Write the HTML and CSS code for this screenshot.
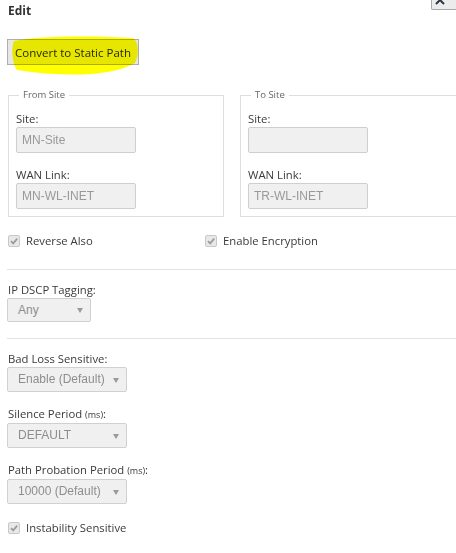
FILE: index.html
```html
<!DOCTYPE html>
<html lang="en">
<head>
    <meta charset="UTF-8">
    <meta name="viewport" content="width=device-width, initial-scale=1.0">
    <title>Edit Path</title>
    <link rel="stylesheet" href="styles.css">
</head>
<body>
    <div class="dialog">
        <div class="titlebar">
            <span class="title">Edit</span>
            <button class="close" title="Close">
                <svg width="25" height="20" viewBox="0 0 25 20"><path d="M5 6 L13 14 M13 6 L5 14" stroke="#2b3440" stroke-width="2" fill="none"/></svg>
            </button>
        </div>

        <div class="toolbar">
            <span class="marked">
                <button class="btn">Convert to Static Path</button>
                <svg class="marker" width="134" height="42" viewBox="0 0 134 42"><path d="M7 6 C 35 0, 95 1, 126 3 C 132 7, 132 20, 128 28 C 105 42, 55 42, 10 35 C 5 28, 4 13, 7 6 Z" fill="#ffff00"/></svg>
            </span>
        </div>

        <div class="sites">
            <fieldset class="site">
                <legend>From Site</legend>
                <label class="field-label">Site:</label>
                <div class="text-input">MN-Site</div>
                <label class="field-label gap">WAN Link:</label>
                <div class="text-input">MN-WL-INET</div>
            </fieldset>
            <fieldset class="site open">
                <legend>To Site</legend>
                <label class="field-label">Site:</label>
                <div class="text-input"></div>
                <label class="field-label gap">WAN Link:</label>
                <div class="text-input">TR-WL-INET</div>
            </fieldset>
        </div>

        <div class="checks">
            <label class="check first"><span class="box"><svg width="10" height="10" viewBox="0 0 10 10"><path d="M2 5.2 L4.2 7.4 L8.2 2.6" stroke="#9c9c9c" stroke-width="1.8" fill="none"/></svg></span>Reverse Also</label>
            <label class="check"><span class="box"><svg width="10" height="10" viewBox="0 0 10 10"><path d="M2 5.2 L4.2 7.4 L8.2 2.6" stroke="#9c9c9c" stroke-width="1.8" fill="none"/></svg></span>Enable Encryption</label>
        </div>

        <hr class="divider">

        <div class="field">
            <div class="field-label">IP DSCP Tagging:</div>
            <div class="select small">Any<span class="arrow"></span></div>
        </div>

        <hr class="divider">

        <div class="field">
            <div class="field-label">Bad Loss Sensitive:</div>
            <div class="select">Enable (Default)<span class="arrow"></span></div>
        </div>
        <div class="field">
            <div class="field-label">Silence Period <span class="unit">(ms)</span>:</div>
            <div class="select">DEFAULT<span class="arrow"></span></div>
        </div>
        <div class="field">
            <div class="field-label">Path Probation Period <span class="unit">(ms)</span>:</div>
            <div class="select">10000 (Default)<span class="arrow"></span></div>
        </div>

        <div class="checks last">
            <label class="check"><span class="box"><svg width="10" height="10" viewBox="0 0 10 10"><path d="M2 5.2 L4.2 7.4 L8.2 2.6" stroke="#9c9c9c" stroke-width="1.8" fill="none"/></svg></span>Instability Sensitive</label>
        </div>
    </div>
</body>
</html>
```

FILE: styles.css
```css
html, body {
    margin: 0;
    overflow: hidden;
    background-color: #fff;
}
body {
    font-family: "Open Sans", "Noto Sans", sans-serif;
    font-size: 11px;
    color: #3a3a3a;
}
.dialog {
    padding-left: 7px;
}
.titlebar {
    display: flex;
    justify-content: space-between;
    align-items: flex-start;
    height: 20px;
}
.title {
    font-weight: bold;
    font-size: 12px;
    line-height: 16px;
    padding: 3px 0 0 1px;
    color: #333;
}
.close {
    width: 25px;
    height: 20px;
    margin-top: -10px;
    padding: 0;
    border: 1px solid #a8a8a8;
    border-right: none;
    border-radius: 2px 0 0 2px;
    background-color: #ececec;
    display: block;
    line-height: 0;
}
.close svg {
    margin: -1px 0 0 -1px;
}
.toolbar {
    margin-top: 19px;
}
.marked {
    position: relative;
    display: inline-block;
}
.btn {
    display: block;
    width: 132px;
    height: 26px;
    padding: 0;
    border: 1px solid #adadad;
    background-color: #e6e6e6;
    font-family: "Open Sans", "Noto Sans", sans-serif;
    font-size: 11.5px;
    color: #2a2a2a;
}
.marker {
    position: absolute;
    left: 0;
    top: -4px;
    mix-blend-mode: multiply;
    pointer-events: none;
}
.sites {
    display: flex;
    gap: 16px;
    margin-top: 24px;
    margin-left: 1px;
}
.site {
    box-sizing: border-box;
    width: 216px;
    min-width: 0;
    margin: 0;
    padding: 0 7px 7px;
    border: 1px solid #dedede;
}
.site.open {
    border-right: none;
}
.site legend {
    font-size: 9.5px;
    line-height: 12px;
    color: #666;
    padding: 0 4px;
    margin-left: 3px;
}
.field-label {
    display: block;
    font-size: 11.3px;
    line-height: 16px;
    margin-top: 10px;
}
.field-label.gap {
    margin-top: 14px;
}
.unit {
    font-size: 9px;
}
.text-input {
    box-sizing: border-box;
    width: 120px;
    height: 26px;
    border: 1px solid #cfcfcf;
    border-radius: 2px;
    background-color: #f0f0f0;
    padding-left: 5px;
    font-family: "Liberation Sans", Arial, sans-serif;
    font-size: 12px;
    line-height: 24px;
    color: #999;
}
.checks {
    display: flex;
    margin-top: 16px;
    padding-left: 1px;
    height: 16px;
}
.checks.last {
    margin-top: 16px;
}
.check {
    display: flex;
    align-items: center;
    gap: 6px;
    font-size: 11.3px;
    line-height: 16px;
}
.check.first {
    width: 197px;
}
.box {
    box-sizing: border-box;
    width: 12px;
    height: 12px;
    border: 1px solid #c8c8c8;
    border-radius: 2px;
    background-color: #e8e8e8;
    display: flex;
    align-items: center;
    justify-content: center;
}
.divider {
    margin: 20px 0 0;
    border: none;
    border-top: 1px solid #e3e3e3;
}
.field .field-label {
    margin-top: 12px;
    padding-left: 1px;
}
.field + .field .field-label {
    margin-top: 14px;
}
.select {
    box-sizing: border-box;
    position: relative;
    width: 120px;
    height: 25px;
    border: 1px solid #d0d0d0;
    border-radius: 2px;
    background-color: #f0f0f0;
    padding-left: 10px;
    font-family: "Liberation Sans", Arial, sans-serif;
    font-size: 12px;
    line-height: 23px;
    color: #8e8e8e;
}
.select.small {
    width: 84px;
    height: 24px;
    line-height: 22px;
}
.arrow {
    position: absolute;
    right: 7px;
    top: 50%;
    margin-top: -2px;
    border-left: 3px solid transparent;
    border-right: 3px solid transparent;
    border-top: 5px solid #9a9a9a;
}
.field:has(.small) + .divider {
    margin-top: 16px;
}
```
